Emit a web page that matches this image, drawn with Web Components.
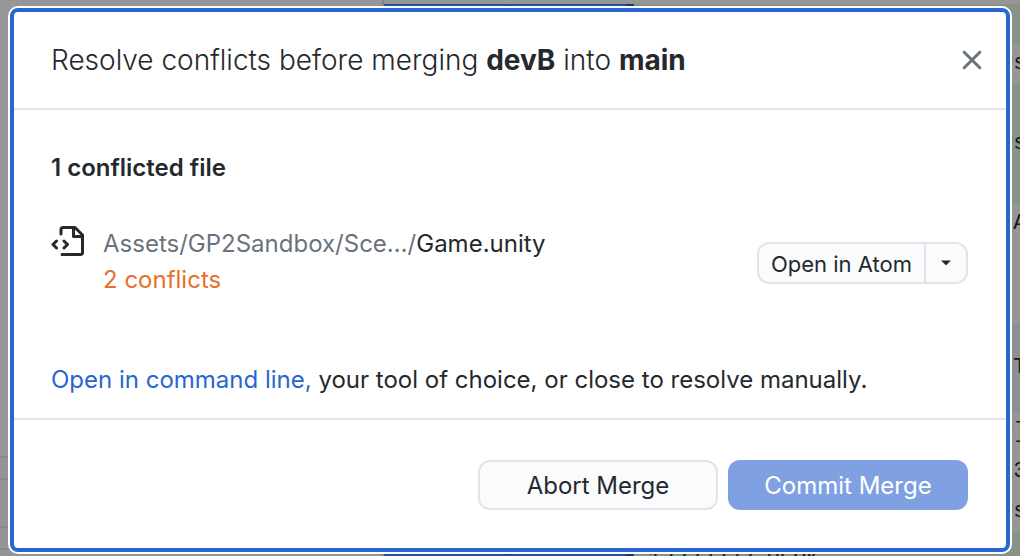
<!DOCTYPE html>
<html lang="en">
<head>
<meta charset="utf-8">
<title>Resolve conflicts</title>
<style>
  html, body { height: 100%; margin: 0; }
  body { font-family: Inter, "Liberation Sans", sans-serif; font-size: 24px; line-height: 36px; color: #24292e; overflow: hidden; }
</style>
</head>
<body>
<merge-app></merge-app>
<script>
const define = (name, html) => {
  const template = document.createElement('template');
  template.innerHTML = html;
  customElements.define(name, class extends HTMLElement {
    constructor() {
      super();
      this.attachShadow({ mode: 'open' }).append(template.content.cloneNode(true));
    }
  });
};

define('diff-backdrop', `
<style>
  :host { display: grid; grid-template-columns: 384px 250px 1fr; background: #969696; overflow: hidden; }
  .files { display: flex; flex-direction: column; justify-content: flex-end; border-right: 2px solid #858585; }
  .files i { height: 20px; border-top: 2px solid #86888b; background: #929496; }
  .files i.tall { height: 46px; background: #949494; }
  .files i.last { height: 6px; }
  .gutter { display: grid; grid-template-columns: 1fr 1fr; margin-top: 4px; }
  .gutter i { background: #25509a; }
  .gutter i + i { border-left: 2px solid #1b4586; border-right: 8px solid #173a72; }
  .code { min-width: 0; overflow: hidden; font: 22px/40px "Liberation Mono", monospace; color: #16191c; }
  .code div { display: flex; flex-direction: column; align-items: flex-end; justify-content: center; }
  .code div.top { justify-content: flex-start; }
  .code span { width: 20px; white-space: nowrap; }
  .add { background: #879386; }
  .hunk { background: #8b9092; }
  .h4 { height: 4px; } .h40 { height: 40px; }
  .h88 { height: 88px; } .h120 { height: 120px; }
  .code .edge { display: block; padding: 8px 14px 0; }
</style>
<div class="files"><i></i><i class="tall"></i><i></i><i class="last"></i></div>
<div class="gutter"><i></i><i></i></div>
<div class="code" aria-hidden="true">
  <div class="h4"></div>
  <div class="h40 add"></div>
  <div class="h40"><span>ys</span></div>
  <div class="h120 add"><span>ys</span></div>
  <div class="h120 top"><span>-A</span></div>
  <div class="h88 hunk"><span>sT</span></div>
  <div class="h120"><span>0]</span><span>13</span><span>ys</span></div>
  <div class="add edge">13333333 UCOK</div>
</div>`);

define('merge-dialog', `
<style>
  :host { display: flex; flex-direction: column; box-sizing: border-box; background: #fff; border: 4px solid #2866d1; border-radius: 8px; box-shadow: 0 0 0 2px #fff; }
  header { display: flex; align-items: center; justify-content: space-between; height: 96px; padding: 0 20px 0 37px; border-bottom: 2px solid #e1e4e8; }
  h1 { margin: 0; font-size: 28px; line-height: 40px; font-weight: 300; }
  .close { display: flex; padding: 4px; border: 0; background: none; }
  main { flex: 1; display: flex; flex-direction: column; padding: 0 37px; }
  footer { display: flex; justify-content: flex-end; gap: 10px; padding: 40px 38px 38px; border-top: 2px solid #e1e4e8; }
</style>
<header>
  <h1><slot name="title"></slot></h1>
  <button class="close" aria-label="Close"><svg width="20" height="20" viewBox="0 0 20 20" fill="none" stroke="#6a737d" stroke-width="3" stroke-linecap="round"><path d="M2.200 2.200 17.800 17.800M17.800 2.200 2.200 17.800"/></svg></button>
</header>
<main><slot></slot></main>
<footer><slot name="actions"></slot></footer>`);

define('conflict-file', `
<style>
  :host { display: flex; align-items: flex-start; }
  svg { flex: none; margin-right: 18px; }
  .info { flex: 1; min-width: 0; padding-top: 2px; }
  p { margin: 0; }
  .dir { color: #6a737d; }
  .count { color: #e8702a; }
</style>
<svg width="34" height="34" viewBox="0 0 34 34" fill="none" stroke="#24292e" stroke-width="3" stroke-linecap="round" stroke-linejoin="round"><path d="M10 10V5.500a2 2 0 0 1 2-2H24l7.500 7.500V28.500a2 2 0 0 1-2 2H11"/><path d="M22.500 4v8.500H31"/><path d="M5.500 17 2 20.500 5.500 24M13 17l3.500 3.500L13 24"/></svg>
<div class="info">
  <p><span class="dir"><slot name="dir"></slot></span><slot name="name"></slot></p>
  <p class="count"><slot name="count"></slot></p>
</div>
<slot name="action"></slot>`);

define('split-button', `
<style>
  :host { display: flex; box-sizing: border-box; height: 42px; border: 2px solid #e1e4e8; border-radius: 12px; background: #fafbfc; overflow: hidden; font-size: 22px; }
  button { display: flex; align-items: center; justify-content: center; margin: 0; border: 0; padding: 2px 12px 0; background: none; font: inherit; color: inherit; }
  .more { width: 42px; padding: 0; border-left: 2px solid #e1e4e8; }
</style>
<button><slot></slot></button>
<button class="more" aria-label="More options"><svg width="10" height="6" viewBox="0 0 10 6"><path d="M0 .5h10L5.700 4.800a1 1 0 0 1-1.400 0Z" fill="#24292e"/></svg></button>`);

define('action-button', `
<style>
  :host { display: block; width: 240px; }
  button { box-sizing: border-box; width: 100%; height: 50px; margin: 0; padding: 2px 0 0; border: 2px solid #e1e4e8; border-radius: 12px; background: #fafbfc; font: inherit; color: inherit; }
  :host([primary]) button { border-color: #7fa1e2; background: #7fa1e2; color: #fff; }
</style>
<button><slot></slot></button>`);

define('merge-app', `
<style>
  :host { display: grid; height: 100%; grid-template: minmax(0, 1fr) / minmax(0, 1fr); }
  diff-backdrop, merge-dialog { grid-area: 1 / 1; min-height: 0; }
  merge-dialog { margin: 8px 10px 4px; z-index: 1; }
  b { font-weight: 700; }
  h2 { margin: 40px 0 0; font-size: 24px; line-height: 36px; font-weight: 600; }
  conflict-file { margin-top: 38px; }
  split-button { margin: 18px 1px 0 0; }
  .manual { margin: 64px 0 0; }
  a { color: #2866d1; text-decoration: none; }
</style>
<diff-backdrop></diff-backdrop>
<merge-dialog role="dialog">
  <span slot="title">Resolve conflicts before merging <b>devB</b> into <b>main</b></span>
  <h2>1 conflicted file</h2>
  <conflict-file>
    <span slot="dir">Assets/GP2Sandbox/Sce…/</span><span slot="name">Game.unity</span>
    <span slot="count">2 conflicts</span>
    <split-button slot="action">Open in Atom</split-button>
  </conflict-file>
  <p class="manual"><a href="#">Open in command line,</a> your tool of choice, or close to resolve manually.</p>
  <action-button slot="actions">Abort Merge</action-button>
  <action-button slot="actions" primary>Commit Merge</action-button>
</merge-dialog>`);
</script>
</body>
</html>
